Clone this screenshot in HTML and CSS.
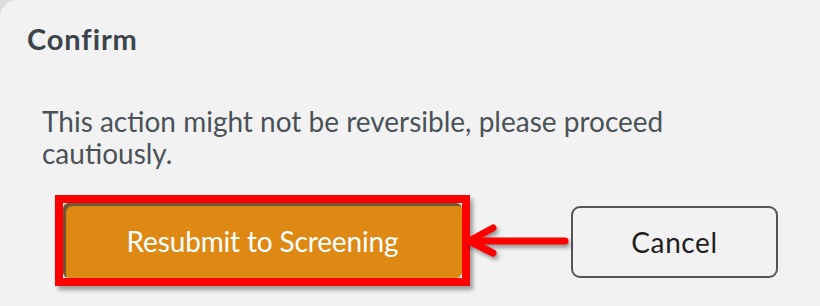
FILE: index.html
```html
<!DOCTYPE html>
<html>
<head>
<meta charset="utf-8">
<link rel="stylesheet" href="styles.css">
</head>
<body>
<div class="modal">
  <h2 class="title">Confirm</h2>
  <p class="message">This action might not be reversible, please proceed cautiously.</p>
  <div class="actions">
    <div class="highlight">
      <button class="btn btn-primary">Resubmit to Screening</button>
    </div>
    <button class="btn btn-cancel">Cancel</button>
    <svg class="arrow" width="112" height="40" viewBox="0 0 112 40">
      <g fill="none" stroke="#ff0000" stroke-width="7" stroke-linecap="round" stroke-linejoin="round">
        <line x1="7" y1="19" x2="103" y2="19"/>
        <polyline points="31,6 7,19 31,31"/>
      </g>
    </svg>
  </div>
</div>
</body>
</html>
```
FILE: styles.css
```css
html, body {
  margin: 0;
  padding: 0;
}
body {
  background: #dedede;
  width: 820px;
  height: 306px;
  overflow: hidden;
}
.modal {
  box-sizing: border-box;
  width: 820px;
  height: 306px;
  background: #f2f2f2;
  border-top-left-radius: 18px;
  padding-left: 27px;
  padding-top: 19px;
  font-family: Lato, "Liberation Sans", sans-serif;
}
.title {
  margin: 0;
  font-size: 29px;
  line-height: 40px;
  font-weight: 700;
  letter-spacing: 0.9px;
  color: #3b444b;
}
.message {
  margin: 46px 0 0 15px;
  width: 680px;
  font-size: 28px;
  line-height: 32px;
  color: #4a5258;
}
.actions {
  position: relative;
  display: flex;
  align-items: flex-start;
  margin-top: 26px;
  padding-left: 28px;
}
.highlight {
  border: 8px solid #ff0000;
  box-shadow: 3px 4px 4px rgba(0, 0, 0, 0.35);
  display: flex;
}
.btn {
  font-family: Lato, "Liberation Sans", sans-serif;
  font-size: 28px;
  cursor: pointer;
}
.btn-primary {
  width: 399px;
  height: 75px;
  border: 0;
  border-radius: 6px;
  background: #dd8914;
  color: #ffffff;
  box-shadow: inset 3px 3px 1px rgba(70, 70, 70, 0.75);
  padding: 0;
  letter-spacing: -0.15px;
}
.btn-cancel {
  margin-left: 101px;
  margin-top: 11px;
  width: 207px;
  height: 72px;
  border: 2px solid #555555;
  border-radius: 9px;
  background: transparent;
  color: #1e1e1e;
  letter-spacing: 0.6px;
}
.arrow {
  position: absolute;
  left: 435px;
  top: 27px;
  filter: drop-shadow(2px 3px 2px rgba(0, 0, 0, 0.4));
}
```
